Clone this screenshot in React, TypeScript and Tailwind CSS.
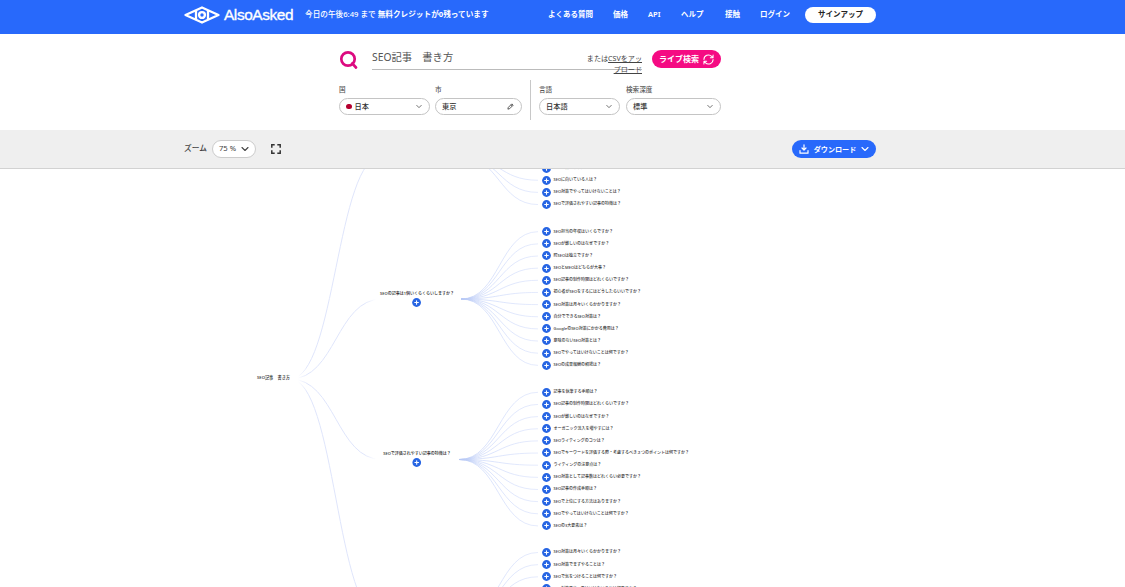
import React from "react";

const GROUPS: { apexX: number; apexY: number; top: number; hidden: number; total: number; items: string[] }[] = [
  {
    apexX: 460,
    apexY: 155.8,
    top: 168,
    hidden: 5,
    total: 9,
    items: ["SEO対策のやり方は？", "SEOに向いている人は？", "SEO対策でやってはいけないことは？", "SEOで評価されやすい記事の特徴は？"],
  },
  {
    apexX: 461,
    apexY: 299,
    top: 231.6,
    hidden: 0,
    total: 12,
    items: [
      "SEO担当の年収はいくらですか？",
      "SEOが難しいのはなぜですか？",
      "町SEOは独立ですか？",
      "SEOとMEOはどちらが大事？",
      "SEO記事の制作時間はどれくらいですか？",
      "初心者がSEOをするにはどうしたらいいですか？",
      "SEO対策は月々いくらかかりますか？",
      "自分でできるSEO対策は？",
      "GoogleのSEO対策にかかる費用は？",
      "意味のないSEO対策とは？",
      "SEOでやってはいけないことは何ですか？",
      "SEOの成果報酬の相場は？",
    ],
  },
  {
    apexX: 459,
    apexY: 459.5,
    top: 392.2,
    hidden: 0,
    total: 12,
    items: [
      "記事を執筆する手順は？",
      "SEO記事の制作時間はどれくらいですか？",
      "SEOが難しいのはなぜですか？",
      "オーガニック流入を増やすには？",
      "SEOライティングのコツは？",
      "SEOでキーワードを評価する際・考慮するべき３つのポイントは何ですか？",
      "ライティングの注意点は？",
      "SEO対策として記事数はどれくらい必要ですか？",
      "SEO記事の作成手順は？",
      "SEOで上位にする方法はありますか？",
      "SEOでやってはいけないことは何ですか？",
      "SEOの3大要素は？",
    ],
  },
  {
    apexX: 460,
    apexY: 619,
    top: 552.4,
    hidden: 0,
    total: 12,
    items: ["SEO対策は月々いくらかかりますか？", "SEO対策でまずやることは？", "SEOで気をつけることは何ですか？", "SEO対策でやってはいけないことは何ですか？"],
  },
];

const PITCH = 12.15;
const CANVAS_TOP = 169;

function curve(x1: number, y1: number, x2: number, y2: number) {
  const m = (x1 + x2) / 2;
  return `M${x1},${y1} C${m},${y1} ${m},${y2} ${x2},${y2}`;
}

function Chevron({ className }: { className: string }) {
  return (
    <svg viewBox="0 0 8 6" className={className} fill="none" stroke="currentColor" strokeWidth="1.1" strokeLinecap="round" strokeLinejoin="round">
      <path d="M1 1.5 4 4.5 7 1.5" />
    </svg>
  );
}

function Plus() {
  return (
    <svg viewBox="0 0 10 10" className="size-[9px] shrink-0">
      <circle cx="5" cy="5" r="4.9" fill="#2765e3" />
      <path d="M5 3v4M3 5h4" stroke="#fff" strokeWidth="1.2" strokeLinecap="round" />
    </svg>
  );
}

function Logo() {
  return (
    <svg viewBox="0 0 36 18" className="h-[18px] w-9 shrink-0" fill="none" stroke="#fff" strokeWidth="2.3" strokeLinejoin="round">
      <path d="M12 4.2 18 1.5 24 4.2 34.5 9 24 13.8 18 16.5 12 13.8 1.5 9Z" />
      <path d="M12 4.2v9.6M24 4.2v9.6" />
      <circle cx="18" cy="9" r="2.9" strokeWidth="2.4" />
    </svg>
  );
}

function Field({ label, value, width, dot, edit }: { label: string; value: string; width: string; dot?: boolean; edit?: boolean }) {
  return (
    <div className={`flex flex-col ${width}`}>
      <span className="h-[14px] text-[6.6px] leading-[12px] font-medium text-[#555]">{label}</span>
      <div className="flex h-[17px] items-center rounded-full border border-[#c4c4c4] bg-white pr-[7px] pl-[6px] text-[7.2px] font-medium text-[#333]">
        {dot && <span className="mr-[3px] size-[5.5px] rounded-full bg-[#b5002f]" />}
        <span className="flex-1 whitespace-nowrap">{value}</span>
        {edit ? (
          <svg viewBox="0 0 8 8" className="size-[7px]" fill="none" stroke="#444" strokeWidth="1">
            <path d="M1 7 1.5 5 5.5 1 7 2.5 3 6.5ZM4.5 2 6 3.5" />
          </svg>
        ) : (
          <Chevron className="h-[5px] w-[6px] text-[#555]" />
        )}
      </div>
    </div>
  );
}

function Branch({ text, y }: { text: string; y: number }) {
  return (
    <div className="absolute left-[417px] flex -translate-x-1/2 flex-col items-center" style={{ top: y - CANVAS_TOP - 9.5 }}>
      <span className="h-[8px] text-[4px] leading-[8px] font-medium whitespace-nowrap">{text}</span>
      <Plus />
    </div>
  );
}

export default function App() {
  return (
    <div className="flex h-[587px] w-[1125px] flex-col overflow-hidden bg-white font-['Noto_Sans','Noto_Sans_CJK_JP',sans-serif] text-[#222]">
      <header className="flex h-[34px] shrink-0 items-start bg-[#2869fb] pl-[184px] text-white">
        <div className="flex h-[29px] w-[121px] items-center gap-[4px]">
          <Logo />
          <span className="font-['Liberation_Sans',sans-serif] text-[15.4px] tracking-[-0.4px] [-webkit-text-stroke:0.35px_white]">AlsoAsked</span>
        </div>
        <p className="flex h-[29px] w-[242px] items-center text-[7.65px] font-medium whitespace-pre">
          今日の午後6:49 まで <b>無料クレジットが0残っています</b>
        </p>
        <nav className="flex h-[29px] items-center pl-px text-[7.5px] font-bold whitespace-nowrap">
          <span className="w-[65px]">よくある質問</span>
          <span className="w-[35px]">価格</span>
          <span className="w-[33px] font-semibold">API</span>
          <span className="w-[44px]">ヘルプ</span>
          <span className="w-[35px]">接触</span>
          <span className="w-[45px]">ログイン</span>
          <span className="flex h-[16px] w-[71px] items-center justify-center rounded-full bg-white text-[#222]">サインアップ</span>
        </nav>
      </header>

      <section className="flex h-[96px] shrink-0 flex-col pl-[339px]">
        <div className="flex h-[48px] pt-[14px]">
          <svg viewBox="0 0 20 20" className="mt-[2px] size-[20px]" fill="none" stroke="#dc0a80" strokeWidth="2.7" strokeLinecap="round">
            <circle cx="9" cy="9" r="6.7" />
            <path d="m13.2 13.4 3.8 4.1" />
          </svg>
          <div className="ml-[13px] flex h-[22px] w-[270px] justify-between border-b border-[#bbb]">
            <span className="text-[10.3px] leading-[19px] whitespace-pre text-[#555]">SEO記事　書き方</span>
            <p className="pt-[5px] text-right text-[7.1px] leading-[11px] whitespace-nowrap text-[#444]">
              または<u>CSVをアッ</u>
              <br />
              <u>プロード</u>
            </p>
          </div>
          <button className="mt-[2px] ml-[10px] flex h-[18px] w-[69px] items-center justify-center gap-[4px] rounded-full bg-[#f50b83] text-[8px] font-bold whitespace-nowrap text-white">
            ライブ検索
            <svg viewBox="0 0 24 24" className="size-[11px]" fill="none" stroke="#fff" strokeWidth="2.2" strokeLinecap="round" strokeLinejoin="round">
              <path d="M2 12a10 10 0 0 1 17-7l3 3M22 2v6h-6M22 12a10 10 0 0 1-17 7l-3-3M2 22v-6h6" />
            </svg>
          </button>
        </div>
        <div className="flex pt-[2px]">
          <Field label="国" value="日本" width="w-[91px]" dot />
          <div className="w-[5px]" />
          <Field label="市" value="東京" width="w-[87px]" edit />
          <div className="mx-[8px] -mt-[4px] h-[40px] w-px bg-[#c8c8c8]" />
          <Field label="言語" value="日本語" width="w-[81px]" />
          <div className="w-[6px]" />
          <Field label="検索深度" value="標準" width="w-[95px]" />
        </div>
      </section>

      <section className="flex h-[39px] shrink-0 items-center border-b border-[#d2d2d2] bg-[#efefef] pl-[184px]">
        <span className="w-[27px] text-[7.7px] font-medium text-[#444]">ズーム</span>
        <div className="ml-px flex h-[18px] w-[44px] items-center justify-center gap-[5px] rounded-full border border-[#ccc] bg-white text-[7.7px] text-[#444]">
          <span>75 %</span>
          <Chevron className="h-[6px] w-[8px]" />
        </div>
        <svg viewBox="0 0 10 10" className="ml-[15px] size-[10px]" fill="none" stroke="#333" strokeWidth="1.5">
          <path d="M.8 3.7V.8h2.9M6.3.8h2.9v2.9M9.2 6.3v2.9H6.3M3.7 9.2H.8V6.3" />
        </svg>
        <button className="ml-[511px] flex h-[18px] w-[84px] items-center justify-center rounded-full bg-[#2869fb] text-[7.1px] font-bold whitespace-nowrap text-white">
          <svg viewBox="0 0 10 10" className="mr-[5px] size-[10px]" fill="none" stroke="#fff" strokeWidth="1.2" strokeLinecap="round" strokeLinejoin="round">
            <path d="M5 .8v5M3 4l2 2 2-2M1 6.5v2.7h8V6.5" />
          </svg>
          ダウンロード
          <Chevron className="ml-[5px] h-[6px] w-[8px]" />
        </button>
      </section>

      <main className="relative h-[418px] overflow-hidden bg-white">
        <svg viewBox="0 169 1125 418" className="block h-[418px] w-[1125px]" fill="none">
          <defs>
            <linearGradient id="trunk" gradientUnits="userSpaceOnUse" x1="298" x2="376" y1="0" y2="0">
              <stop offset="0" stopColor="#dfe5fb" stopOpacity="0" />
              <stop offset=".12" stopColor="#dfe5fb" />
              <stop offset=".85" stopColor="#dfe5fb" />
              <stop offset="1" stopColor="#dfe5fb" stopOpacity="0" />
            </linearGradient>
            <linearGradient id="twig" gradientUnits="userSpaceOnUse" x1="459" x2="538" y1="0" y2="0">
              <stop offset="0" stopColor="#b4c6f4" stopOpacity=".5" />
              <stop offset=".35" stopColor="#ccd8fa" stopOpacity=".7" />
              <stop offset="1" stopColor="#dfe6fc" stopOpacity=".8" />
            </linearGradient>
          </defs>
          {GROUPS.map((g) => (
            <path key={g.apexY} d={curve(290, 379, 382, g.apexY)} stroke="url(#trunk)" strokeWidth="1" />
          ))}
          {GROUPS.map((g) =>
            Array.from({ length: g.total }, (_, i) => (
              <path
                key={`${g.apexY}-${i}`}
                d={curve(g.apexX, g.apexY, 538, g.top + (i - g.hidden) * PITCH + 0.1)}
                stroke="url(#twig)"
                strokeWidth="1"
              />
            )),
          )}
        </svg>
        <span className="absolute top-[205px] left-[257px] text-[4.2px] leading-[8px] font-medium whitespace-pre">SEO記事　書き方</span>
        <Branch text="SEOの記事は1個いくらくらいしますか？" y={299} />
        <Branch text="SEOで評価されやすい記事の特徴は？" y={459.5} />
        {GROUPS.map((g) =>
          g.items.map((text, i) => (
            <div
              key={`${g.apexY}-${i}`}
              className="absolute left-[541.5px] flex h-[10px] items-center gap-[3px] text-[4px] leading-[10px] font-medium whitespace-nowrap text-[#333]"
              style={{ top: g.top + i * PITCH - CANVAS_TOP - 5 }}
            >
              <Plus />
              <span>{text}</span>
            </div>
          )),
        )}
      </main>
    </div>
  );
}
